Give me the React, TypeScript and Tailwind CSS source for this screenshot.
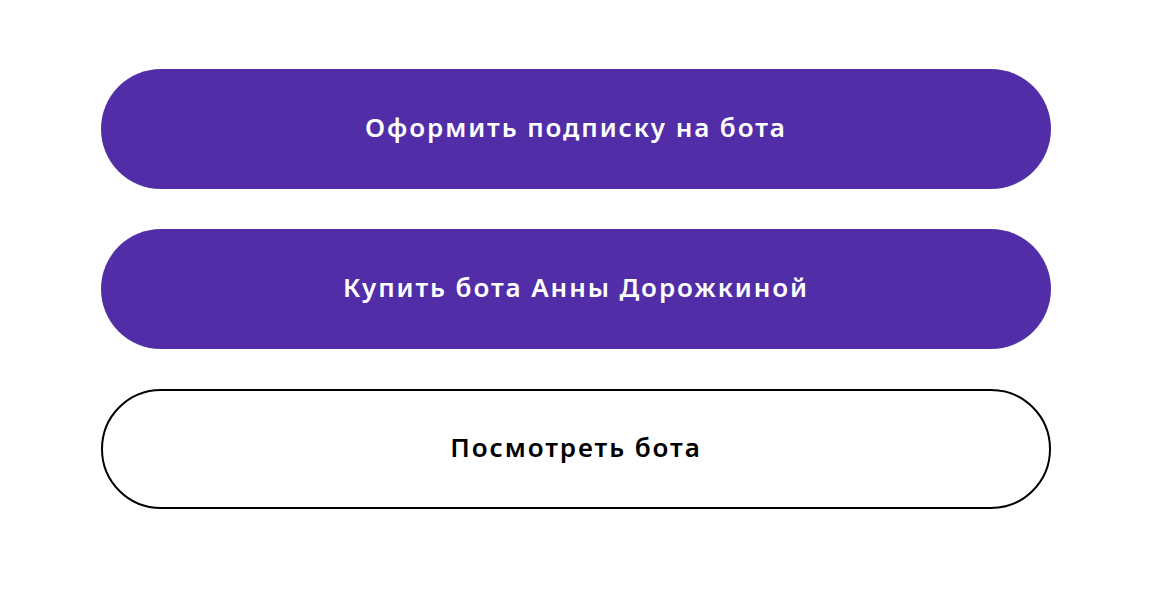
export default function App() {
    const buttons = [
        { label: 'Оформить подписку на бота', filled: true },
        { label: 'Купить бота Анны Дорожкиной', filled: true },
        { label: 'Посмотреть бота', filled: false },
    ];

    return (
        <div className="min-h-screen bg-white pt-[69px] font-['Noto_Sans',sans-serif]">
            <div className="mx-auto flex w-[950px] flex-col gap-[40px]">
                {buttons.map((b, i) => (
                    <button
                        key={i}
                        className={
                            b.filled
                                ? 'flex h-[120px] items-center justify-center rounded-full bg-[#512da8] pb-[3px] text-[26px] font-semibold tracking-[1.9px] text-white'
                                : 'flex h-[120px] items-center justify-center rounded-full border-2 border-black bg-white pb-[3px] text-[26px] font-semibold tracking-[1.9px] text-black'
                        }
                    >
                        {b.label}
                    </button>
                ))}
            </div>
        </div>
    );
}
